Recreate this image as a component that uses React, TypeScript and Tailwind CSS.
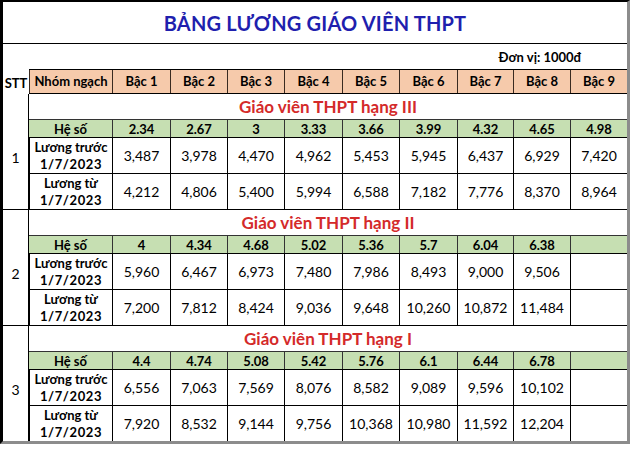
import React from "react";

type Section = {
  title: string;
  hs: string[];
  truoc: string[];
  tu: string[];
};

const sections: Section[] = [
  {
    title: "Giáo viên THPT hạng III",
    hs: ["2.34", "2.67", "3", "3.33", "3.66", "3.99", "4.32", "4.65", "4.98"],
    truoc: ["3,487", "3,978", "4,470", "4,962", "5,453", "5,945", "6,437", "6,929", "7,420"],
    tu: ["4,212", "4,806", "5,400", "5,994", "6,588", "7,182", "7,776", "8,370", "8,964"],
  },
  {
    title: "Giáo viên THPT hạng II",
    hs: ["4", "4.34", "4.68", "5.02", "5.36", "5.7", "6.04", "6.38", ""],
    truoc: ["5,960", "6,467", "6,973", "7,480", "7,986", "8,493", "9,000", "9,506", ""],
    tu: ["7,200", "7,812", "8,424", "9,036", "9,648", "10,260", "10,872", "11,484", ""],
  },
  {
    title: "Giáo viên THPT hạng I",
    hs: ["4.4", "4.74", "5.08", "5.42", "5.76", "6.1", "6.44", "6.78", ""],
    truoc: ["6,556", "7,063", "7,569", "8,076", "8,582", "9,089", "9,596", "10,102", ""],
    tu: ["7,920", "8,532", "9,144", "9,756", "10,368", "10,980", "11,592", "12,204", ""],
  },
];

const grid =
  "grid grid-cols-[83px_58px_57px_57px_58px_57px_58px_56px_57px_57px]";

function DataRow({ label, values }: { label: string; values: string[] }) {
  return (
    <div className={`${grid} h-[36px] border-t border-black`}>
      <div className="flex flex-col items-center justify-center border-l border-black text-[13px] font-bold leading-[17px]">
        <span>{label}</span>
        <span className="tracking-[0.6px]">1/7/2023</span>
      </div>
      {values.map((v, i) => (
        <div
          key={i}
          className="flex items-center justify-center border-l border-black text-[14px]"
        >
          {v}
        </div>
      ))}
    </div>
  );
}

export default function App() {
  const bac = ["Bậc 1", "Bậc 2", "Bậc 3", "Bậc 4", "Bậc 5", "Bậc 6", "Bậc 7", "Bậc 8", "Bậc 9"];
  return (
    <div className="bg-white w-[640px] h-[451px]" style={{ fontFamily: "Lato, 'Noto Sans', sans-serif" }}>
      <div className="w-[630px] border-l-[3px] border-t-2 border-l-black border-t-black border-r-[3px] border-r-[#8c8c8c] border-b-[3px] border-b-[#8c8c8c] text-black">
        <div className="h-[42px] border-b border-black flex items-center justify-center text-[20px] font-bold text-[#1f1fae] tracking-[0.2px]">
          BẢNG LƯƠNG GIÁO VIÊN THPT
        </div>
        <div className="h-[25px] flex items-end justify-end pr-[46px] pb-[2px] text-[13px] font-bold">
          Đơn vị: 1000đ
        </div>
        <div className="flex h-[25px]">
          <div className="w-[26px] flex items-end justify-center text-[13px] font-bold pb-[1px]">STT</div>
          <div className={`${grid} flex-1 border-t border-b border-black bg-[#f6caab]`}>
            <div className="flex items-center justify-center border-l border-[#3a2a20] text-[13px] font-bold">
              Nhóm ngạch
            </div>
            {bac.map((b) => (
              <div key={b} className="flex items-center justify-center border-l border-[#3a2a20] text-[13px] font-bold">
                {b}
              </div>
            ))}
          </div>
        </div>
        {sections.map((s, idx) => (
          <div key={idx} className={`flex ${idx < 2 ? "border-b border-black" : ""}`}>
            <div className="w-[26px] flex items-center justify-center pt-[12px] text-[14px]">
              {idx + 1}
            </div>
            <div className="flex-1 flex flex-col border-l border-black">
              <div className="h-[25px] flex items-center justify-center text-[17px] font-bold text-[#d42a2a]">
                {s.title}
              </div>
              <div className={`${grid} h-[18px] border-t border-[#333] bg-[#c6dfb2]`}>
                <div className="flex items-center justify-center text-[13px] font-bold">Hệ số</div>
                {s.hs.map((h, i) => (
                  <div key={i} className="flex items-center justify-center border-l border-[#333] text-[13px] font-bold">
                    {h}
                  </div>
                ))}
              </div>
              <DataRow label="Lương trước" values={s.truoc} />
              <DataRow label="Lương từ" values={s.tu} />
            </div>
          </div>
        ))}
      </div>
    </div>
  );
}
